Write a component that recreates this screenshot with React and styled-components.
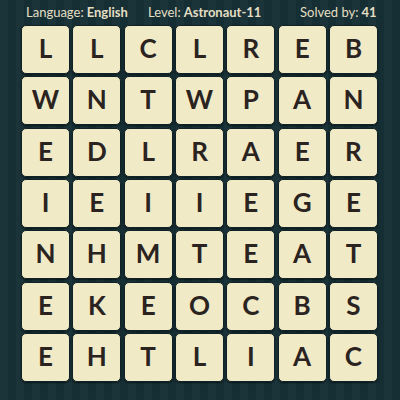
import React from "react";
import styled, { createGlobalStyle } from "styled-components";

const Global = createGlobalStyle`
  html, body { margin: 0; padding: 0; }
  body { width: 400px; height: 400px; overflow: hidden; }
`;

const Page = styled.div`
  width: 400px;
  height: 400px;
  box-sizing: border-box;
  background-color: #163036;
  background-image: repeating-linear-gradient(
    90deg,
    rgba(255,255,255,0.02) 0px,
    rgba(255,255,255,0.02) 8px,
    rgba(0,0,0,0.035) 8px,
    rgba(0,0,0,0.035) 16px
  );
  font-family: Lato, "Open Sans", sans-serif;
  display: flex;
  flex-direction: column;
`;

const Header = styled.div`
  height: 25px;
  display: grid;
  grid-template-columns: 122px 152px 1fr;
  align-items: center;
  padding: 0 28px 1px 26px;
  box-sizing: border-box;
  color: #e4dfc3;
  font-size: 13px;
`;

const Info = styled.span`
  white-space: nowrap;
  justify-self: ${(p) => (p.$end ? "end" : "start")};
  b { font-weight: 700; margin-left: 3px; }
`;

const Board = styled.div`
  display: grid;
  grid-template-columns: repeat(7, 49px);
  grid-auto-rows: 49px;
  gap: 2.33px;
  padding-left: 21px;
`;

const Tile = styled.div`
  box-sizing: border-box;
  background: #f1eac6;
  border: 1px solid #0f2225;
  border-radius: 5px;
  box-shadow: 0 1px 2px rgba(0, 0, 0, 0.55);
  display: flex;
  align-items: center;
  justify-content: center;
  color: #2a231f;
  font-weight: 700;
  font-size: 26px;
  line-height: 1;
  padding-bottom: 3px;
`;

const rows = [
  "LLCLREB",
  "WNTWPAN",
  "EDLRAER",
  "IEIIEGE",
  "NHMTEAT",
  "EKEOCBS",
  "EHTLIAC",
];

export default function App() {
  return (
    <>
      <Global />
      <Page>
        <Header>
          <Info>Language:<b>English</b></Info>
          <Info>Level:<b>Astronaut-11</b></Info>
          <Info $end>Solved by:<b>41</b></Info>
        </Header>
        <Board>
          {rows.flatMap((r, i) =>
            r.split("").map((c, j) => <Tile key={`${i}-${j}`}>{c}</Tile>)
          )}
        </Board>
      </Page>
    </>
  );
}
